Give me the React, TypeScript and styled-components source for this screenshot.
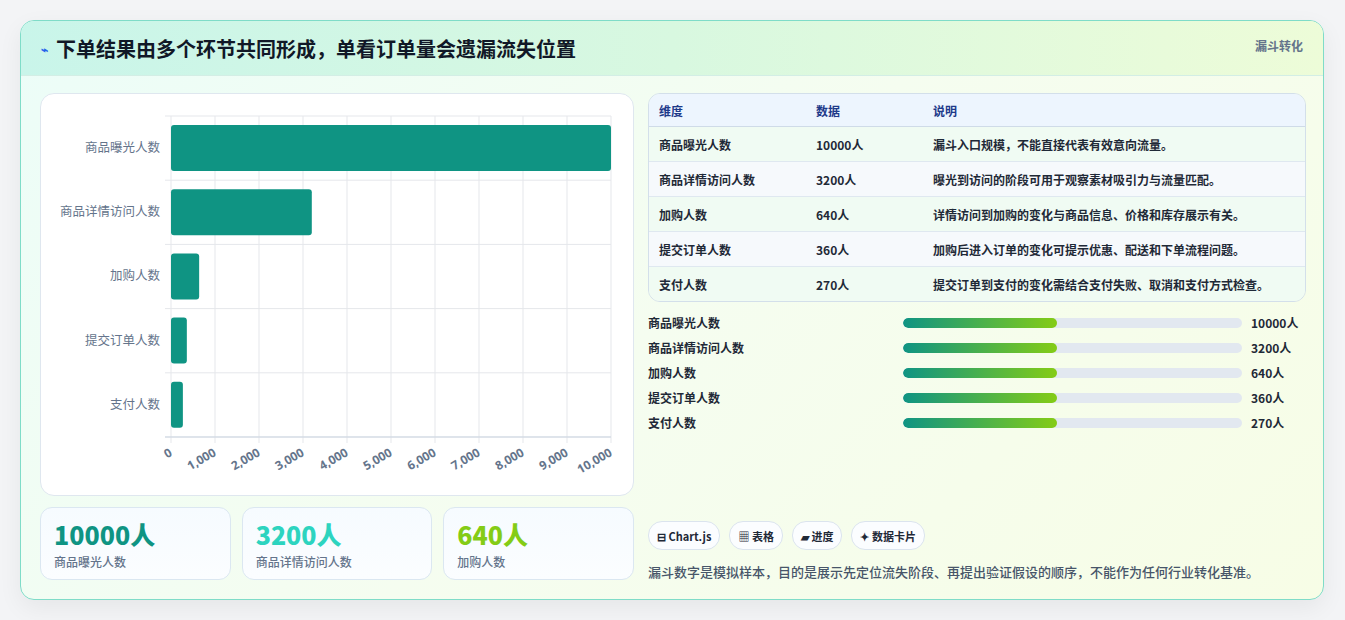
import React from "react";
import styled, { createGlobalStyle } from "styled-components";

const Global = createGlobalStyle`
  body { margin: 0; background: #f3f4f6; font-family: "Noto Sans CJK SC", "Noto Sans", sans-serif; }
`;

const Page = styled.div`
  padding: 20px 20px 20px 20px;
  height: 620px;
  box-sizing: border-box;
`;

const Card = styled.div`
  width: 1304px;
  height: 580px;
  box-sizing: border-box;
  border: 1px solid #7fdcc8;
  border-radius: 14px;
  background: linear-gradient(135deg, #ecfdf8 0%, #f5fdf0 50%, #f7fde6 100%);
  box-shadow: 0 8px 24px rgba(0, 0, 0, 0.06);
  overflow: hidden;
  display: flex;
  flex-direction: column;
`;

const Header = styled.div`
  height: 55px;
  box-sizing: border-box;
  padding: 0 20px;
  display: flex;
  align-items: center;
  justify-content: space-between;
  background: linear-gradient(90deg, #c9f5ea 0%, #d8f8e0 50%, #edfcd8 100%);
  border-bottom: 1px solid #d3eee5;
`;

const Title = styled.h1`
  margin: 0;
  font-size: 20px;
  font-weight: 700;
  color: #111827;
  display: flex;
  align-items: center;
  gap: 8px;
`;

const Tag = styled.span`
  align-self: flex-start;
  margin-top: 16px;
  font-size: 12px;
  font-weight: 700;
  color: #64748b;
`;

const Body = styled.div`
  flex: 1;
  display: grid;
  grid-template-columns: 594px 658px;
  gap: 14px;
  padding: 17px 18px 18px 19px;
`;

const Left = styled.div`
  display: flex;
  flex-direction: column;
  gap: 11px;
`;

const ChartBox = styled.div`
  height: 403px;
  background: #fff;
  border: 1px solid #dfe7ef;
  border-radius: 14px;
  box-sizing: border-box;
`;

const Stats = styled.div`
  display: grid;
  grid-template-columns: repeat(3, 1fr);
  gap: 11px;
`;

const Stat = styled.div`
  height: 73px;
  box-sizing: border-box;
  border: 1px solid #dbe7f1;
  border-radius: 12px;
  background: linear-gradient(180deg, #f6fbff, #fbfdff);
  padding: 10px 13px;
`;

const StatValue = styled.div<{ $c: string }>`
  font-size: 25px;
  font-weight: 800;
  color: ${(p) => p.$c};
  line-height: 32px;
`;

const StatLabel = styled.div`
  font-size: 12px;
  color: #64748b;
  font-weight: 500;
  margin-top: 3px;
`;

const Right = styled.div`
  display: flex;
  flex-direction: column;
`;

const Table = styled.table`
  width: 100%;
  border-collapse: separate;
  border-spacing: 0;
  border: 1px solid #d3dfea;
  border-radius: 12px;
  overflow: hidden;
  font-size: 12px;
`;

const Th = styled.th`
  text-align: left;
  height: 32px;
  padding: 0 10px;
  background: #edf5fe;
  color: #1e3a8a;
  font-weight: 700;
  border-bottom: 1px solid #cfdbe8;
`;

const Tr = styled.tr<{ $alt: boolean }>`
  background: ${(p) => (p.$alt ? "#f6f9fc" : "#f0fbf3")};
`;

const Td = styled.td<{ $last: boolean }>`
  height: 34px;
  padding: 0 10px;
  color: #1f2937;
  font-weight: 600;
  border-bottom: ${(p) => (p.$last ? "none" : "1px solid #dfe8f0")};
`;

const Bars = styled.div`
  display: flex;
  flex-direction: column;
  gap: 8px;
  margin-top: 12px;
`;

const BarRow = styled.div`
  display: grid;
  grid-template-columns: 246px 339px auto;
  gap: 9px;
  align-items: center;
  font-size: 12px;
  font-weight: 700;
  color: #1f2937;
  height: 17px;
`;

const Track = styled.div`
  height: 10px;
  border-radius: 5px;
  background: #e2e8f0;
  overflow: hidden;
`;

const Fill = styled.div`
  height: 100%;
  border-radius: 5px;
  background: linear-gradient(90deg, #0f9483, #84cc16);
`;

const Chips = styled.div`
  margin-top: auto;
  display: flex;
  gap: 9px;
`;

const Chip = styled.span`
  height: 27px;
  padding: 0 8px;
  display: inline-flex;
  align-items: center;
  gap: 3px;
  border-radius: 14px;
  border: 1px solid #dbe4ee;
  background: #fbfdff;
  font-size: 11px;
  font-weight: 700;
  color: #1f2937;
`;

const Note = styled.p`
  margin: 12px 0 0;
  font-size: 13px;
  font-weight: 500;
  color: #475569;
`;

const rows = [
  ["商品曝光人数", 10000, "漏斗入口规模，不能直接代表有效意向流量。"],
  ["商品详情访问人数", 3200, "曝光到访问的阶段可用于观察素材吸引力与流量匹配。"],
  ["加购人数", 640, "详情访问到加购的变化与商品信息、价格和库存展示有关。"],
  ["提交订单人数", 360, "加购后进入订单的变化可提示优惠、配送和下单流程问题。"],
  ["支付人数", 270, "提交订单到支付的变化需结合支付失败、取消和支付方式检查。"],
] as const;

const Chart = () => {
  const L = 130, R = 570, T = 22, B = 343;
  const w = R - L;
  const band = (B - T) / 5;
  return (
    <svg width="592" height="401" style={{ display: "block" }}>
      {Array.from({ length: 11 }, (_, i) => (
        <line key={i} x1={L + (w * i) / 10} x2={L + (w * i) / 10} y1={T} y2={B + 6} stroke="#e5e7eb" />
      ))}
      {Array.from({ length: 6 }, (_, i) => (
        <line key={i} x1={L - 6} x2={R} y1={T + band * i} y2={T + band * i} stroke="#e5e7eb" />
      ))}
      <line x1={L - 6} x2={R} y1={B} y2={B} stroke="#cbd5e1" />
      {rows.map(([name, v], i) => {
        const y = T + band * i + 9;
        return (
          <g key={name}>
            <rect x={L} y={y} width={(w * v) / 10000} height={46} rx={3} fill="#0f9483" />
            <text x={L - 11} y={y + 27} textAnchor="end" fontSize="12.5" fill="#64748b">{name}</text>
          </g>
        );
      })}
      {Array.from({ length: 11 }, (_, i) => {
        const x = L + (w * i) / 10;
        return (
          <text key={i} x={x + 2} y={B + 18} textAnchor="end" fontSize="12" fontWeight="700" fill="#64748b"
            fontFamily="Noto Sans, sans-serif" transform={`rotate(-30 ${x + 2} ${B + 18})`}>
            {(i * 1000).toLocaleString("en-US")}
          </text>
        );
      })}
    </svg>
  );
};

export default function App() {
  return (
    <Page>
      <Global />
      <Card>
        <Header>
          <Title><span style={{ color: "#2563eb", fontSize: 12 }}>⌁</span>下单结果由多个环节共同形成，单看订单量会遗漏流失位置</Title>
          <Tag>漏斗转化</Tag>
        </Header>
        <Body>
          <Left>
            <ChartBox><Chart /></ChartBox>
            <Stats>
              <Stat><StatValue $c="#0f9483">10000人</StatValue><StatLabel>商品曝光人数</StatLabel></Stat>
              <Stat><StatValue $c="#2dd4bf">3200人</StatValue><StatLabel>商品详情访问人数</StatLabel></Stat>
              <Stat><StatValue $c="#84cc16">640人</StatValue><StatLabel>加购人数</StatLabel></Stat>
            </Stats>
          </Left>
          <Right>
            <Table>
              <thead>
                <tr><Th style={{ width: 137 }}>维度</Th><Th style={{ width: 97 }}>数据</Th><Th>说明</Th></tr>
              </thead>
              <tbody>
                {rows.map(([n, v, d], i) => (
                  <Tr key={n} $alt={i % 2 === 1}>
                    <Td $last={i === 4}>{n}</Td><Td $last={i === 4}>{v}人</Td><Td $last={i === 4}>{d}</Td>
                  </Tr>
                ))}
              </tbody>
            </Table>
            <Bars>
              {rows.map(([n, v]) => (
                <BarRow key={n}>
                  <span>{n}</span>
                  <Track><Fill style={{ width: "45.5%" }} /></Track>
                  <span>{v}人</span>
                </BarRow>
              ))}
            </Bars>
            <Chips>
              <Chip>⊟ Chart.js</Chip>
              <Chip>▦ 表格</Chip>
              <Chip>▰ 进度</Chip>
              <Chip>✦ 数据卡片</Chip>
            </Chips>
            <Note>漏斗数字是模拟样本，目的是展示先定位流失阶段、再提出验证假设的顺序，不能作为任何行业转化基准。</Note>
          </Right>
        </Body>
      </Card>
    </Page>
  );
}
